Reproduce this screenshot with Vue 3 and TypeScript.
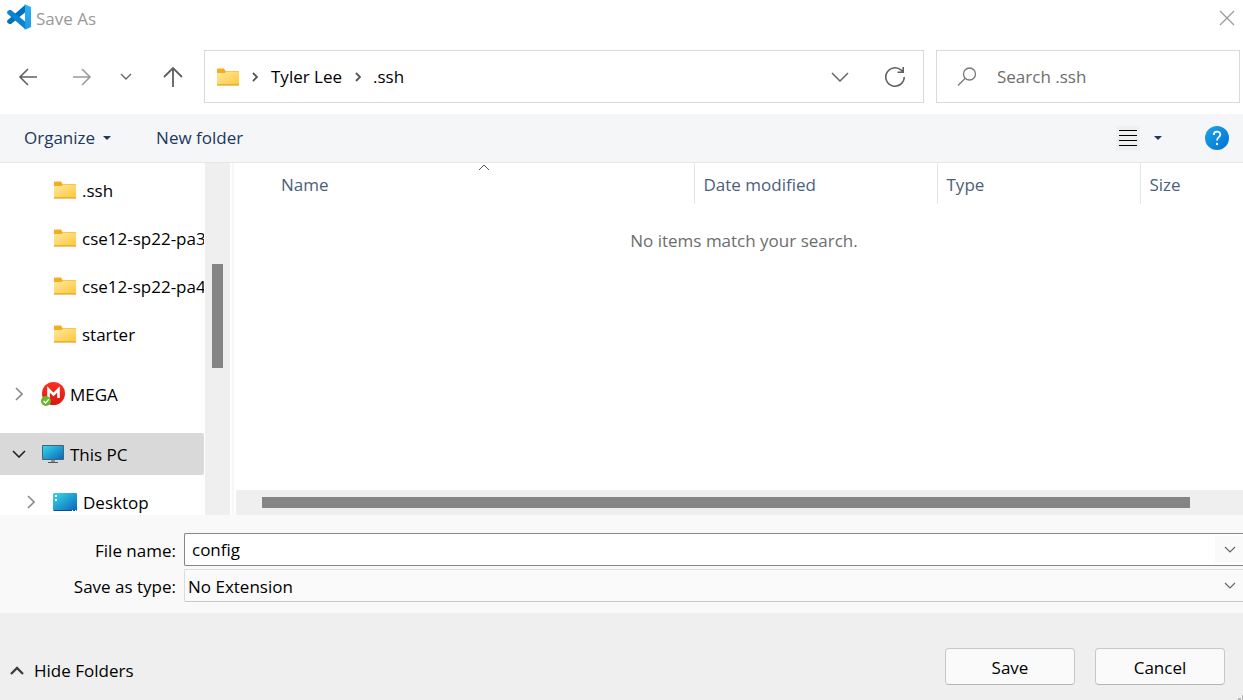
<script setup lang="ts">
import { ref } from 'vue'

interface Folder { name: string }

const folders: Folder[] = [
  { name: '.ssh' },
  { name: 'cse12-sp22-pa3' },
  { name: 'cse12-sp22-pa4' },
  { name: 'starter' },
]
const fileName = ref('config')
const fileType = ref('No Extension')
const query = ref('')
</script>

<template>
  <main class="dialog">
    <svg class="defs" width="0" height="0" aria-hidden="true">
      <defs>
        <linearGradient id="folderFill" x1="0" y1="0" x2="1" y2="1">
          <stop offset="0" stop-color="#ffe8a0" /><stop offset="1" stop-color="#ffc83c" />
        </linearGradient>
        <linearGradient id="screenFill" x1="0" y1="0" x2="1" y2="1">
          <stop offset="0" stop-color="#38dbe6" /><stop offset="1" stop-color="#0a62bd" />
        </linearGradient>
        <linearGradient id="helpFill" x1="0" y1="0" x2="1" y2="1">
          <stop offset="0" stop-color="#1fa5e8" /><stop offset="1" stop-color="#0070d4" />
        </linearGradient>
        <linearGradient id="megaFill" x1="0" y1="0" x2="0" y2="1">
          <stop offset="0" stop-color="#ff2e22" /><stop offset="1" stop-color="#d9180c" />
        </linearGradient>
        <linearGradient id="codeFill" x1="0" y1="0" x2="0" y2="1">
          <stop offset="0" stop-color="#30b1f2" /><stop offset="1" stop-color="#1e96ea" />
        </linearGradient>
      </defs>
    </svg>

    <header class="titlebar">
      <svg class="logo" width="26" height="26" viewBox="0 0 26 26" aria-hidden="true">
        <path d="M19 1 1.200 16.500v2l2 1.500 1.800 0L19 8.500z" fill="#0070b8" />
        <path d="M19 25 1.200 9.500v-2l2-1.500 1.800 0L19 17.500z" fill="#0a84d0" />
        <path d="M18 .8 19.500.5 25 3v20l-5.500 2.500L18 25.200l1-1V2z" fill="url(#codeFill)" />
      </svg>
      <h1>Save As</h1>
      <button class="close" aria-label="Close">
        <svg width="16" height="16" viewBox="0 0 16 16"><path d="M1 1 15 15M15 1 1 15" /></svg>
      </button>
    </header>

    <nav class="navbar" aria-label="Location">
      <div class="history">
        <button aria-label="Back"><svg width="20" height="20" viewBox="0 0 20 20" stroke="#5f5f5f" stroke-width="1.6"><path d="M19 10H2M10 2 2 10l8 8" /></svg></button>
        <button class="forward" aria-label="Forward"><svg width="20" height="20" viewBox="0 0 20 20" stroke="#9b9b9b" stroke-width="1.6"><path d="M1 10h17M10 2l8 8-8 8" /></svg></button>
        <button class="recent" aria-label="Recent locations"><svg width="12" height="8" viewBox="0 0 12 8" stroke="#666" stroke-width="1.4"><path d="m1 1 5 5 5-5" /></svg></button>
        <button class="up" aria-label="Up"><svg width="20" height="22" viewBox="0 0 20 22" stroke="#5f5f5f" stroke-width="1.8"><path d="M10 21V2M1 11l9-9 9 9" /></svg></button>
      </div>
      <div class="address">
        <svg width="22" height="18" viewBox="0 0 22 18" class="folder"><path d="M0 1.500Q0 .5 1 .5h6L8.500 3H22v14H0z" fill="#f5ae1b" /><path d="M0 5h8l1-1.500h13V16.500H0z" fill="url(#folderFill)" /><path d="M0 17h22" stroke="#e2a51f" stroke-width="1.200" /></svg>
        <svg class="crumb" width="6" height="10" viewBox="0 0 6 10"><path d="m1 1 4 4-4 4" /></svg>
        <a href="#">Tyler Lee</a>
        <svg class="crumb" width="6" height="10" viewBox="0 0 6 10"><path d="m1 1 4 4-4 4" /></svg>
        <a href="#">.ssh</a>
        <button class="expand" aria-label="Previous locations"><svg width="18" height="10" viewBox="0 0 18 10" stroke="#666" stroke-width="1.500"><path d="m1 1 8 8 8-8" /></svg></button>
        <button aria-label="Refresh"><svg width="22" height="22" viewBox="0 0 22 22" stroke="#606060" stroke-width="1.600"><path d="M20.200 11a9.200 9.200 0 1 1-3-6.800L19.200 6M13.500 6.200h5.700V1" /></svg></button>
      </div>
      <label class="search">
        <svg width="20" height="20" viewBox="0 0 20 20" stroke="#777" stroke-width="1.300" aria-hidden="true"><circle cx="12.500" cy="7" r="6" /><path d="M8 11.500 1 18.500" /></svg>
        <input v-model="query" type="search" placeholder="Search .ssh" aria-label="Search .ssh">
      </label>
    </nav>

    <div class="toolbar">
      <button class="organize">Organize <i class="triangle"></i></button>
      <button>New folder</button>
      <button class="view" aria-label="View">
        <svg width="24" height="24" viewBox="0 0 24 24"><path fill="#f0f0f0" stroke="none" d="M0 0h24v24H0z" /><path d="M3 4.500h18M3 9.500h18M3 14.500h18M3 19.500h18" stroke="#000" /></svg>
        <i class="triangle"></i>
      </button>
      <button class="help" aria-label="Help">
        <svg width="24" height="24" viewBox="0 0 24 24"><circle cx="12" cy="12" r="12" fill="url(#helpFill)" /><path d="M8.800 9c0-4.500 6.700-4.300 6.500-.3-.1 2.400-3.300 2.700-3.300 5.800" stroke="#fff" stroke-width="1.800" /><circle cx="12" cy="18" r="1.200" fill="#fff" /></svg>
      </button>
    </div>

    <section class="browser">
      <aside class="sidebar">
        <ul class="tree">
          <li v-for="folder in folders" :key="folder.name" class="row nested">
            <svg width="22" height="18" viewBox="0 0 22 18" class="folder"><path d="M0 1.500Q0 .5 1 .5h6L8.500 3H22v14H0z" fill="#f5ae1b" /><path d="M0 5h8l1-1.500h13V16.500H0z" fill="url(#folderFill)" /><path d="M0 17h22" stroke="#e2a51f" stroke-width="1.200" /></svg>
            <span>{{ folder.name }}</span>
          </li>
          <li class="row root">
            <svg class="twist" width="8" height="14" viewBox="0 0 8 14"><path d="m1 1 6 6-6 6" /></svg>
            <svg width="24" height="24" viewBox="0 0 24 24"><circle cx="12.500" cy="11.500" r="11.500" fill="url(#megaFill)" /><path d="M7.500 16V7.500l5 5 5-5V16" stroke="#fff" stroke-width="2.600" /><circle cx="5" cy="19" r="5" fill="#68b52e" /><path d="m2.500 19 2 2L8 17" stroke="#fff" stroke-width="1.200" /></svg>
            <span>MEGA</span>
          </li>
          <li class="row root selected">
            <svg class="twist open" width="14" height="8" viewBox="0 0 14 8"><path d="m1 1 6 6 6-6" /></svg>
            <svg width="24" height="20" viewBox="0 0 24 20"><path d="M10 16h4v2.500h-4z" fill="#8a9299" stroke="none" /><path d="M7 18.500h10" stroke="#555" /><path d="M1.500 1.500h21v14h-21z" fill="url(#screenFill)" stroke="#42657a" /></svg>
            <span>This PC</span>
          </li>
          <li class="row child">
            <svg class="twist" width="8" height="14" viewBox="0 0 8 14"><path d="m1 1 6 6-6 6" /></svg>
            <svg width="24" height="18" viewBox="0 0 24 18"><rect width="24" height="18" rx="1" fill="url(#screenFill)" /><path d="M2 2h2v2H2zM2 6h2v2H2z" fill="#fff" /><path d="M1 17.500h22" stroke="#0b4f82" /><path d="M19 17.500h1M22 17.500h1" stroke="#fff" /></svg>
            <span>Desktop</span>
          </li>
        </ul>
        <div class="vscroll"><div class="vthumb"></div></div>
      </aside>

      <div class="files">
        <table>
          <thead>
            <tr>
              <th class="name">Name<svg class="sort" width="12" height="6" viewBox="0 0 12 6"><path d="m1 6 5-5 5 5" /></svg></th>
              <th class="date">Date modified</th>
              <th class="type">Type</th>
              <th class="size">Size</th>
            </tr>
          </thead>
          <tbody><tr><td colspan="4">No items match your search.</td></tr></tbody>
        </table>
        <div class="hscroll"><div class="hthumb"></div></div>
      </div>
    </section>

    <form class="fields" @submit.prevent>
      <label for="fileName">File name:</label>
      <div class="combo filename">
        <input id="fileName" v-model="fileName" type="text">
        <button type="button" aria-label="File name history"><svg width="12" height="7" viewBox="0 0 12 7"><path d="m1 1 5 5 5-5" /></svg></button>
      </div>
      <label for="fileType">Save as type:</label>
      <div class="combo filetype">
        <select id="fileType" v-model="fileType"><option>No Extension</option></select>
        <svg width="12" height="7" viewBox="0 0 12 7" aria-hidden="true"><path d="m1 1 5 5 5-5" /></svg>
      </div>
    </form>

    <footer class="footer">
      <button class="hide"><svg width="14" height="10" viewBox="0 0 14 10"><path d="m1 8 6-6 6 6" /></svg>Hide Folders</button>
      <button class="action">Save</button>
      <button class="action">Cancel</button>
      <svg class="grip" width="5" height="5" viewBox="0 0 5 5" aria-hidden="true"><path d="M0 3h3v2H0zM4 0h1v5H4z" fill="#b8b8b8" /></svg>
    </footer>
  </main>
</template>

<style>
html, body { background: #fff; }
</style>

<style scoped>
* { box-sizing: border-box; }
.dialog { min-height: 100vh; display: flex; flex-direction: column; overflow: hidden; color: #000; font: 17px/24px "Open Sans", "Noto Sans", sans-serif; }
button, input, select { font: inherit; color: inherit; border: 0; background: none; padding: 0; margin: 0; outline: none; }
button { display: flex; align-items: center; justify-content: center; white-space: nowrap; }
svg { display: block; flex: none; fill: none; }
.defs { position: absolute; }

.titlebar { height: 36px; display: flex; align-items: center; padding: 0 8px 0 6px; }
h1 { margin: 0 auto 0 4px; padding-top: 2px; font-size: 17px; font-weight: 400; color: #999; }
.logo { align-self: flex-start; margin-top: 4px; }
.close svg { stroke: #999; stroke-width: 1.3; }

.navbar { display: flex; height: 78px; padding: 14px 3px 11px 0; }
.history { width: 204px; display: flex; align-items: center; padding: 0 21px 0 18px; }
.forward { margin-left: 34px; }
.recent { margin-left: 28px; }
.up { margin-left: auto; }
.address { flex: 1; display: flex; align-items: center; border: 1px solid #d9d9d9; padding: 0 17px 0 12px; }
.address a { color: inherit; text-decoration: none; }
.crumb { margin: 0 12px 0 13px; stroke: #555; stroke-width: 1.8; }
.folder + .crumb { margin-right: 13px; }
.expand { margin: 0 35px 0 auto; }
.search { width: 304px; margin-left: 12px; display: flex; align-items: center; gap: 20px; border: 1px solid #d9d9d9; padding: 0 20px; }
.search input { min-width: 0; flex: 1; appearance: none; }
.search input::placeholder { color: #6e6e6e; opacity: 1; }

.toolbar { height: 49px; display: flex; align-items: center; padding: 0 14px 0 24px; gap: 45px; background: #f4f6f8; border-bottom: 1px solid #e5e7e9; color: #1e395b; }
.organize { gap: 8px; }
.triangle { border: 4px solid transparent; border-top-color: #1e395b; border-bottom: 0; }
.view { margin: 0 -2px 0 auto; gap: 14px; }

.browser { height: 352px; display: flex; }
.sidebar { width: 230px; display: flex; overflow: hidden; }
.tree { width: 205px; margin: 0; padding: 3px 1px 0 0; list-style: none; overflow: hidden; }
.row { height: 48px; display: flex; align-items: center; gap: 6px; white-space: nowrap; overflow: hidden; }
.row span { padding-top: 2px; }
.nested { padding-left: 54px; }
.root { height: 42px; margin: 15px 0 18px; padding-left: 15px; gap: 5px; }
.root svg + svg { margin-left: 13px; }
.selected { background: #d9d9d9; border-radius: 0 2px 2px 0; margin-bottom: 3px; padding-left: 12px; }
.child { padding-left: 27px; }
.child svg + svg { margin-left: 12px; }
.twist { stroke: #8a8a8a; stroke-width: 1.6; }
.open { stroke: #222; }
.root .open + svg { margin-left: 10px; }
.vscroll { width: 25px; background: #efefef; padding: 101px 7px 0; }
.vthumb { width: 11px; height: 104px; background: #858585; }

.files { flex: 1; min-width: 0; display: flex; flex-direction: column; justify-content: space-between; border-left: 2px solid #f7f7f7; margin-left: 2px; padding-left: 2px; }
table { width: 100%; border-collapse: collapse; table-layout: fixed; }
th { position: relative; height: 41px; padding: 2px 0 0 9px; font-weight: 400; text-align: left; color: #4c607a; border-left: 1px solid #e5e5e5; }
.name { border: 0; padding-left: 45px; }
.date { width: 243px; }
.type { width: 203px; }
.size { width: 103px; }
.sort { position: absolute; left: 242px; top: 1px; stroke: #555; }
td { height: 72px; padding: 2px 0 0 9px; text-align: center; color: #6d6d6d; }
.hscroll { height: 25px; background: #efefef; padding: 7px 53px 7px 26px; }
.hthumb { height: 11px; background: #858585; }

.fields { height: 98px; display: grid; grid-template-columns: 176px 1fr; grid-template-rows: 33px 33px; column-gap: 8px; row-gap: 3px; padding-top: 18px; background: #f9f9f9; align-items: center; }
.fields label { padding-top: 2px; text-align: right; }
.combo { height: 33px; display: flex; align-items: center; border: 1px solid #868686; border-right: 0; border-radius: 2px 0 0 2px; position: relative; }
.combo svg { stroke: #666; stroke-width: 1.2; }
.filename { background: #fff; }
.filename input { flex: 1; min-width: 0; padding-left: 7px; }
.filename button { width: 28px; height: 27px; padding-left: 2px; background: #fafafa; }
.filetype { border-color: #dcdcdc; border-bottom-color: #c8c8c8; background: #fafafa; }
.filetype select { flex: 1; appearance: none; padding: 2px 0 0 3px; }
.filetype svg { position: absolute; right: 7px; pointer-events: none; }

.footer { position: relative; flex: 1; min-height: 87px; display: flex; align-items: flex-start; padding: 35px 18px 0 10px; gap: 20px; background: #efefef; }
.hide { height: 46px; margin-right: auto; gap: 10px; }
.hide svg { stroke: #3f3f3f; stroke-width: 2.4; }
.action { width: 130px; height: 37px; padding-top: 2px; background: #fafafa; border: 1px solid #c8c8c8; border-bottom-color: #b4b4b4; border-radius: 4px; }
.grip { position: absolute; right: 0; bottom: 0; }
</style>
